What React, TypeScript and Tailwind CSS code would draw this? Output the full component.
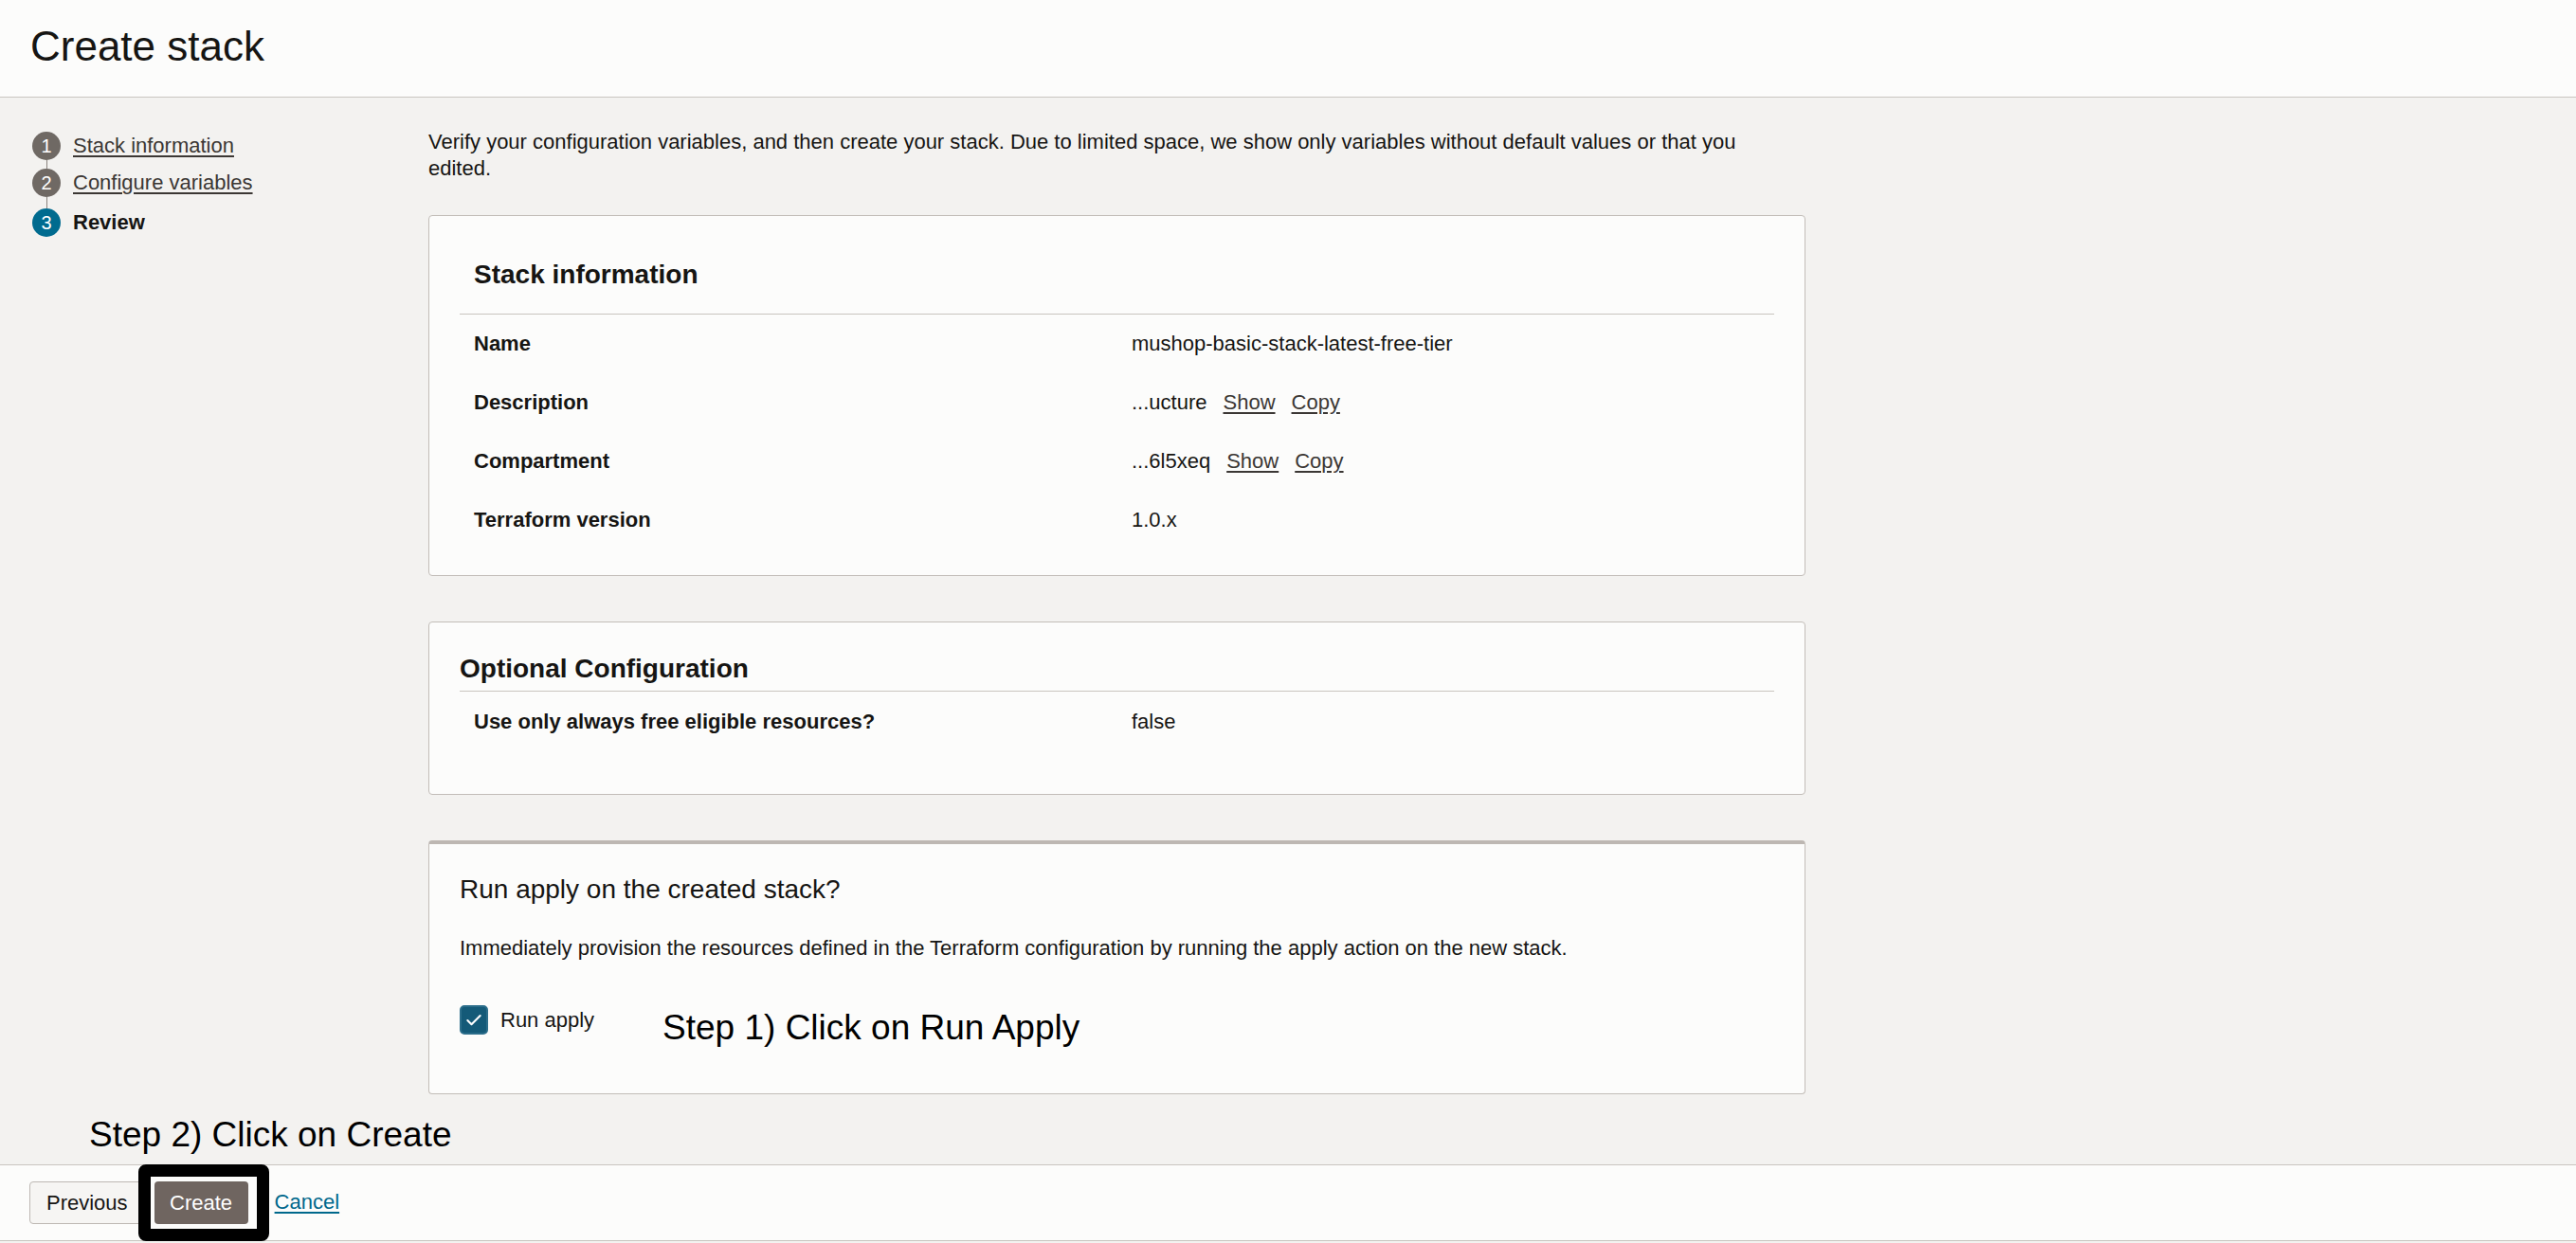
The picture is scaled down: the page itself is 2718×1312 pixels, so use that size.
import { Check } from "lucide-react"

const steps = [
  { n: 1, label: "Stack information", done: true },
  { n: 2, label: "Configure variables", done: true },
  { n: 3, label: "Review", done: false },
]

const stackRows = [
  { label: "Name", value: "mushop-basic-stack-latest-free-tier", links: false },
  { label: "Description", value: "...ucture", links: true },
  { label: "Compartment", value: "...6l5xeq", links: true },
  { label: "Terraform version", value: "1.0.x", links: false },
]

function Row({ label, value, links }: { label: string; value: string; links: boolean }) {
  return (
    <div className="grid grid-cols-[694px_1fr] pl-[15px] py-[17px] text-[22px] leading-[28px]">
      <div className="font-bold text-[#161513]">{label}</div>
      <div className="flex items-center gap-[17px] text-[#161513]">
        <span>{value}</span>
        {links && (
          <>
            <span className="underline underline-offset-[3px] text-[#3b3734]">Show</span>
            <span className="underline underline-offset-[3px] text-[#3b3734]">Copy</span>
          </>
        )}
      </div>
    </div>
  )
}

export default function App() {
  return (
    <div
      className="h-screen flex flex-col bg-[#f3f2f0] text-[#161513]"
      style={{ fontFamily: '"Liberation Sans", Arial, sans-serif' }}
    >
      <header className="h-[103px] shrink-0 bg-[#fcfcfb] border-b border-[#c9c5c0] pl-[32px] pt-[23px]">
        <h1 className="text-[44px] leading-[52px] font-normal">Create stack</h1>
      </header>

      <div className="h-[1126px] shrink-0 flex flex-col">
        <div className="flex items-start pl-[34px]">
          <nav className="w-[418px] shrink-0 pt-[36px]">
            {steps.map((s, i) => (
              <div key={s.n}>
                <div className="flex items-center gap-[13px]">
                  <div
                    className={
                      "w-[30px] h-[30px] rounded-full flex items-center justify-center text-white text-[20px] " +
                      (s.done ? "bg-[#6f6964]" : "bg-[#006b8f]")
                    }
                  >
                    {s.n}
                  </div>
                  <span
                    className={
                      "text-[22px] leading-[28px] " +
                      (s.done
                        ? "underline underline-offset-[3px] text-[#3b3734]"
                        : "font-bold text-[#161513]")
                    }
                  >
                    {s.label}
                  </span>
                </div>
                {i < steps.length - 1 && (
                  <div className={"w-px bg-[#8a847f] ml-[14.5px] " + (i === 0 ? "h-[9px]" : "h-[12px]")} />
                )}
              </div>
            ))}
          </nav>

          <main className="w-[1453px] shrink-0 pt-[33px]">
            <p className="max-w-[1405px] text-[22px] leading-[28px] text-[#161513]">
              Verify your configuration variables, and then create your stack. Due to limited space, we show only
              variables without default values or that you edited.
            </p>

            {/* stack information */}
            <section className="mt-[35px] bg-[#fcfcfb] border border-[#c2bdb8] rounded-[4px] px-[32px] pb-[27px]">
              <div className="pt-[45px] pb-[24px] pl-[15px] border-b border-[#c9c4bf]">
                <h2 className="text-[28px] leading-[34px] font-bold">Stack information</h2>
              </div>
              {stackRows.map((r) => (
                <Row key={r.label} {...r} />
              ))}
            </section>

            {/* optional configuration */}
            <section className="mt-[48px] bg-[#fcfcfb] border border-[#c2bdb8] rounded-[4px] px-[32px] pb-[45px]">
              <div className="pt-[32px] pb-[6px] border-b border-[#c9c4bf]">
                <h2 className="text-[28px] leading-[34px] font-bold">Optional Configuration</h2>
              </div>
              <div className="pt-[1px]">
                <Row label="Use only always free eligible resources?" value="false" links={false} />
              </div>
            </section>

            {/* run apply */}
            <section className="mt-[48px] bg-[#fcfcfb] border border-[#c2bdb8] border-t-[4px] border-t-[#bdb7b2] rounded-[4px] px-[32px] pt-[31px] pb-[48px]">
              <h2 className="text-[28px] leading-[34px] font-normal">Run apply on the created stack?</h2>
              <p className="mt-[31px] text-[22px] leading-[28px]">
                Immediately provision the resources defined in the Terraform configuration by running the apply action on
                the new stack.
              </p>
              <div className="mt-[46px] flex items-start">
                <div className="w-[30px] h-[31px] rounded-[5px] bg-[#145a78] border-2 border-[#2b6d8a] flex items-center justify-center">
                  <Check className="w-[20px] h-[20px] text-white" strokeWidth={2.5} />
                </div>
                <span className="ml-[13px] mt-[2px] text-[22px] leading-[28px]">Run apply</span>
                <span className="ml-[72px] mt-[3px] text-[37px] leading-[42px] text-black">Step 1) Click on Run Apply</span>
              </div>
            </section>
          </main>
        </div>

        <div className="mt-[22px] pl-[94px] text-[37px] leading-[42px] text-black">Step 2) Click on Create</div>
      </div>

      <footer className="relative h-[81px] shrink-0 bg-[#fcfcfb] border-y border-[#c9c5c0] flex items-start pt-[17px] pl-[31px]">
        <button className="h-[45px] px-[17px] rounded-[4px] border border-[#bdb8b3] bg-[#f6f5f3] text-[22px] text-[#161513]">
          Previous
        </button>
        <button className="ml-[10px] h-[45px] w-[99px] rounded-[4px] bg-[#6f6560] text-[22px] text-white">
          Create
        </button>
        <a className="ml-[28px] mt-[8px] text-[22px] leading-[28px] text-[#00688c] underline underline-offset-[3px]">
          Cancel
        </a>
        <div className="absolute left-[146px] top-[-1px] w-[138px] h-[81px] border-[13px] border-black rounded-[8px]" />
      </footer>
    </div>
  )
}
